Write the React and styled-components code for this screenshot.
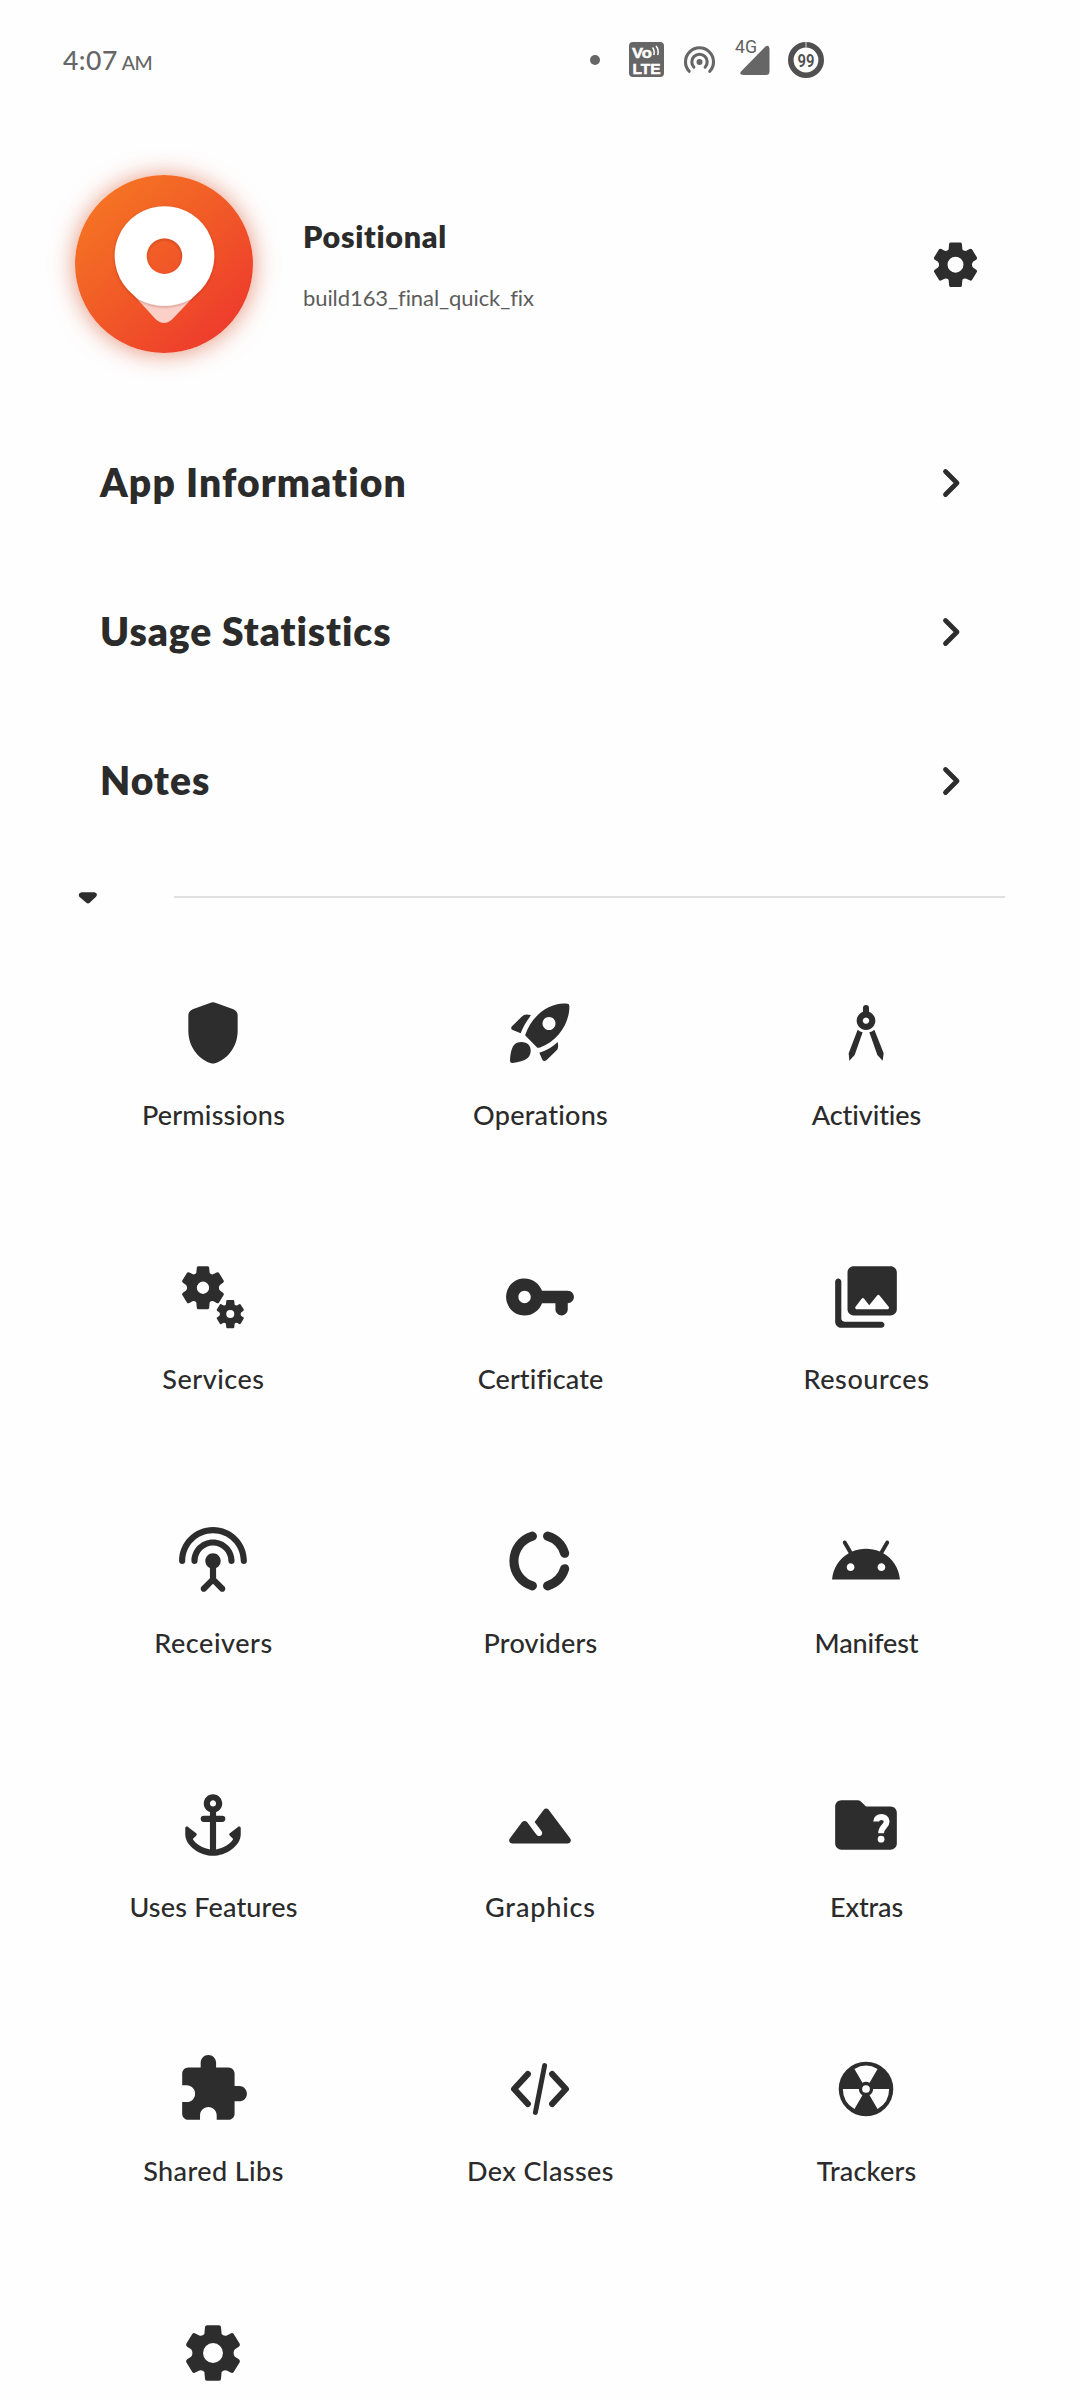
import React from 'react';
import styled, { createGlobalStyle } from 'styled-components';

const INK = '#2d2d2d';

const GlobalStyle = createGlobalStyle`
  html, body { margin: 0; background: #fefefe; }
  * { box-sizing: border-box; }
`;

const Screen = styled.main`
  width: 1080px;
  height: 2400px;
  overflow: hidden;
  display: flex;
  flex-direction: column;
  background: #fefefe;
  color: #2b2b2b;
  font-family: Lato, 'Open Sans', sans-serif;
  font-variant-ligatures: none;
`;

const StatusBar = styled.header`
  flex: none;
  display: flex;
  justify-content: space-between;
  align-items: center;
  height: 120px;
  padding: 0 256px 0 63px;
  color: #666;
`;

const Clock = styled.div`
  display: flex;
  align-items: baseline;
  gap: 4px;
`;

const Time = styled.span`
  font-size: 26.5px;
  font-weight: 500;
  letter-spacing: 0.5px;
`;

const Meridiem = styled.span`
  font-size: 19.5px;
  font-weight: 500;
  letter-spacing: -0.6px;
`;

const StatusIcons = styled.div`
  display: flex;
  align-items: center;
`;

const StatusGlyph = styled.svg`
  display: block;
  width: ${(p) => p.$w}px;
  height: 44px;
  margin-left: ${(p) => p.$gap || 0}px;
  overflow: visible;
`;

const AppHeader = styled.section`
  flex: none;
  display: flex;
  align-items: center;
  height: 288px;
  padding: 0 102px 0 75px;
`;

const AppLogo = styled.div`
  flex: none;
  width: 178px;
  height: 178px;
  border-radius: 50%;
  background: linear-gradient(138deg, #f57523 10%, #f15a27 48%, #ed382d 92%);
  box-shadow: 0 1px 24px 0 rgba(215, 75, 34, 0.6);

  svg { display: block; }
`;

const AppTitles = styled.div`
  flex: 1;
  display: flex;
  flex-direction: column;
  gap: 31px;
  margin-left: 50px;
`;

const AppName = styled.h1`
  margin: 0;
  font-size: 30.5px;
  line-height: 36px;
  font-weight: 800;
  letter-spacing: 0.7px;
`;

const AppBuild = styled.div`
  font-size: 22px;
  line-height: 26px;
  letter-spacing: -0.08px;
  color: #5c5c5c;
`;

const Menu = styled.nav`
  flex: none;
  display: flex;
  flex-direction: column;
`;

const MenuRow = styled.div`
  display: flex;
  align-items: center;
  justify-content: space-between;
  height: 149px;
  padding: 0 118px 0 100px;
`;

const MenuLabel = styled.span`
  padding-bottom: 2px;
  font-size: 39px;
  line-height: 48px;
  font-weight: 800;
  letter-spacing: ${(p) => p.$track}px;
`;

const SectionBreak = styled.div`
  flex: none;
  display: flex;
  align-items: center;
  gap: 76px;
  height: 84px;
  padding: 0 75px 0 78px;
`;

const Rule = styled.hr`
  flex: 1;
  height: 2px;
  margin: 0;
  border: 0;
  background: #e0e0e0;
`;

const Grid = styled.section`
  flex: none;
  display: grid;
  grid-template-columns: 326px 328px 324px;
  grid-auto-rows: 264px;
  margin: 0 50px;
`;

const Tile = styled.div`
  display: flex;
  flex-direction: column;
  align-items: center;
  padding-top: 57px;
`;

const TileIcon = styled.svg`
  display: block;
  width: 74px;
  height: 74px;
  fill: ${INK};
`;

const TileLabel = styled.span`
  margin-top: 28px;
  padding-left: 1px;
  font-size: 27px;
  line-height: 34px;
  font-weight: 500;
  letter-spacing: ${(p) => p.$track}px;
  white-space: nowrap;
`;

const GEAR =
  'M231 135H267Q272 135 273 140L275 162Q279 167 286 167Q290 167 302 160Q308 157 311 161L330 192Q331 197 327 200L315 208Q311 213 311 219Q311 225 315 230L327 238Q331 241 330 246L311 277Q308 281 302 278Q290 271 286 271Q279 271 275 276L273 298Q272 303 267 303H231Q226 303 225 298L223 276Q219 271 212 271Q208 271 196 278Q190 281 187 277L168 246Q167 241 171 238L183 230Q187 225 187 219Q187 213 183 208L171 200Q167 197 168 192L187 161Q190 157 196 160Q208 167 212 167Q219 167 223 162L225 140Q226 135 231 135Z';

const gearHole = (r) => `M${249 - r} 219a${r} ${r} 0 1 0 ${2 * r} 0a${r} ${r} 0 1 0 ${-2 * r} 0Z`;

function GearShape({ cx, cy, height, hole = 30 }) {
  const s = height / 168;
  return (
    <path
      fill={INK}
      fillRule="evenodd"
      transform={`translate(${cx - 249 * s} ${cy - 219 * s}) scale(${s})`}
      d={GEAR + gearHole(hole)}
    />
  );
}

const icons = {
  shield: {
    box: '348 408 222 222',
    art: <path d="M450 429Q459 425 468 429L520 448Q533 454 533 466V512C533 558 505 596 467 609Q459 612 451 609C413 596 385 558 385 512V466Q385 454 398 448Z" />,
  },
  rocket: {
    box: '189 48 222 222',
    art: (
      <>
        <path fillRule="evenodd" d="M382 71Q388 71 388 78C390 118 361 183 298 203Q293 205 289 200L258 169Q254 166 257 161C279 100 336 65 382 71ZM327 111a19.500 19.500 0 1 0 .01 0Z" />
        <path d="M273 106C258 125 249 142 242 160L218 150Q210 146 216 139L245 110Q255 99 273 106Z" />
        <path d="M353 186C340 200 320 211 298 218L307 239Q312 247 320 240L350 211Q357 204 353 186Z" />
        <path d="M210 242C211 222 214 205 222 195C230 184 255 182 266 194C275 204 274 224 263 234C252 243 236 246 218 249Q210 250 210 242Z" />
      </>
    ),
  },
  compass: {
    box: '1167 48 222 222',
    art: (
      <>
        <path fillRule="evenodd" d="M1269 84a9 9 0 0 1 18 0V95.500A28 28 0 1 1 1269 95.500ZM1278 112.500a9.500 9.500 0 1 0 .01 0Z" />
        <path d="M1253 149Q1260 155 1268 157L1244 225L1228 242L1226 220Z" />
        <path d="M1303 149Q1296 155 1288 157L1312 225L1328 242L1331 220Z" />
      </>
    ),
  },
  gears: {
    art: (
      <>
        <GearShape cx={8.75} cy={9} height={14} hole={24} />
        <GearShape cx={17.6} cy={17.55} height={9.1} hole={24} />
      </>
    ),
  },
  key: {
    art: <path d="M12.650 10C11.700 7.310 8.900 5.500 5.770 6.120c-2.290.46-4.150 2.290-4.630 4.580C.32 14.570 3.260 18 7 18c2.610 0 4.830-1.670 5.650-4H17v2c0 1.100.9 2 2 2s2-.9 2-2v-2c1.100 0 2-.9 2-2s-.9-2-2-2h-8.350zM7 14c-1.100 0-2-.9-2-2s.9-2 2-2 2 .9 2 2-.9 2-2 2z" />,
  },
  images: {
    art: <path d="M22 16V4c0-1.100-.9-2-2-2H8c-1.100 0-2 .9-2 2v12c0 1.100.9 2 2 2h12c1.100 0 2-.9 2-2zm-10.600-3.470l1.630 2.180 2.580-3.220c.2-.25.58-.25.78 0l2.960 3.700c.26.33.03.81-.39.81H9c-.41 0-.65-.47-.4-.8l2-2.670c.2-.26.6-.26.8 0zM2 7v13c0 1.100.9 2 2 2h13c.55 0 1-.45 1-1s-.45-1-1-1H5c-.55 0-1-.45-1-1V7c0-.55-.45-1-1-1s-1 .45-1 1z" />,
  },
  antenna: {
    art: <path d="M12 5c-3.870 0-7 3.130-7 7 0 .55.45 1 1 1s1-.45 1-1c0-2.760 2.240-5 5-5s5 2.240 5 5c0 .55.45 1 1 1s1-.45 1-1c0-3.870-3.130-7-7-7zm1 9.290c.88-.39 1.500-1.260 1.500-2.290 0-1.380-1.120-2.500-2.500-2.500S9.500 10.620 9.500 12c0 1.020.62 1.900 1.500 2.290v3.300l-2.710 2.700c-.39.39-.39 1.020 0 1.410.39.39 1.020.39 1.410 0L12 19.410l2.300 2.300c.39.39 1.020.39 1.410 0 .39-.39.39-1.020 0-1.410l-2.700-2.700-.01-3.310zM12 1C5.930 1 1 5.930 1 12c0 .55.45 1 1 1s1-.45 1-1c0-4.970 4.030-9 9-9s9 4.030 9 9c0 .55.45 1 1 1s1-.45 1-1c0-6.070-4.930-11-11-11z" />,
  },
  ring: {
    art: (
      <g fill="none" stroke={INK} strokeWidth="2.950" strokeLinecap="round">
        <path d="M9.550 3.950A8.400 8.400 0 0 0 9.550 20.050" />
        <path d="M14.450 3.950A8.400 8.400 0 0 1 20 9.500" />
        <path d="M20 14.500A8.400 8.400 0 0 1 14.450 20.050" />
      </g>
    ),
  },
  android: {
    art: <path d="M17.600 9.480l1.840-3.180c.16-.31.04-.69-.26-.85-.29-.15-.65-.06-.83.22l-1.880 3.240c-2.860-1.210-6.080-1.210-8.940 0L5.650 5.670c-.19-.29-.58-.38-.87-.2-.28.18-.37.54-.22.83L6.400 9.480C3.300 11.250 1.280 14.440 1 18h22c-.28-3.560-2.300-6.750-5.400-8.520zM7 15.250c-.69 0-1.250-.56-1.250-1.250s.56-1.250 1.250-1.250 1.250.56 1.250 1.250-.56 1.250-1.250 1.250zm10 0c-.69 0-1.250-.56-1.250-1.250s.56-1.250 1.250-1.250 1.250.56 1.250 1.250-.56 1.250-1.250 1.250z" />,
  },
  anchor: {
    art: <path d="M13 9V7.820C14.160 7.400 15 6.300 15 5c0-1.650-1.350-3-3-3S9 3.350 9 5c0 1.300.84 2.400 2 2.820V9H9a1 1 0 0 0 0 2h2v8.920c-2.220-.33-4.590-1.680-5.550-3.370l1.140-1.140c.22-.22.19-.57-.05-.75L3.800 12.600c-.33-.25-.8-.01-.8.4V15c0 3.880 4.920 7 9 7s9-3.120 9-7v-2c0-.41-.47-.65-.8-.4l-2.740 2.060c-.24.18-.27.54-.05.75l1.140 1.140c-.96 1.690-3.330 3.040-5.550 3.370V11h2a1 1 0 0 0 0-2zM12 4c.55 0 1 .45 1 1s-.45 1-1 1-1-.45-1-1 .45-1 1-1z" />,
  },
  peaks: {
    art: <path d="M13.200 7.070L10.250 11l2.250 3c.33.44.24 1.070-.2 1.400-.44.33-1.070.25-1.400-.2-1.050-1.400-2.310-3.070-3.100-4.140-.4-.53-1.200-.53-1.600 0l-4 5.330c-.49.67-.02 1.610.8 1.610h18c.82 0 1.290-.94.8-1.600l-7-9.330c-.4-.54-1.200-.54-1.600 0z" />,
  },
  folder: {
    art: (
      <>
        <path d="M20 6h-8l-1.410-1.410C10.210 4.210 9.700 4 9.170 4H4C2.900 4 2 4.900 2 6v12c0 1.100.9 2 2 2h16c1.100 0 2-.9 2-2V8c0-1.100-.9-2-2-2z" />
        <path fill="none" stroke="#fefefe" strokeWidth="1.900" d="M15.300 10.900C15.300 8.900 18.700 8.900 18.700 10.900C18.700 12.600 16.900 12.300 16.900 14.700" />
        <circle cx="16.900" cy="16.600" r="1.100" fill="#fefefe" />
      </>
    ),
  },
  puzzle: {
    art: <path d="M20.500 11H19V7c0-1.100-.9-2-2-2h-4V3.500C13 2.120 11.880 1 10.500 1S8 2.120 8 3.500V5H4c-1.100 0-1.990.9-1.990 2v3.800H3.500c1.490 0 2.700 1.210 2.700 2.700s-1.210 2.700-2.700 2.700H2V20c0 1.100.9 2 2 2h3.800v-1.500c0-1.490 1.210-2.700 2.700-2.700 1.490 0 2.700 1.210 2.700 2.700V22H17c1.100 0 2-.9 2-2v-4h1.500c1.380 0 2.500-1.120 2.500-2.500S21.880 11 20.500 11z" />,
  },
  code: {
    art: (
      <g fill="none" stroke={INK} strokeLinecap="round" strokeLinejoin="round">
        <path strokeWidth="2" d="M8.050 7.150L3.600 12L8.050 16.850M15.950 7.150L20.400 12L15.950 16.850" />
        <path strokeWidth="1.600" d="M13.500 4.400L10.500 19.600" />
      </g>
    ),
  },
  radiation: {
    art: (
      <>
        <circle cx="12" cy="12" r="8.850" />
        <g fill="#fefefe">
          <path d="M14.300 12H19.500A7.500 7.500 0 0 1 15.750 18.500L13.150 14A2.300 2.300 0 0 0 14.300 12Z" />
          <path d="M9.700 12H4.500A7.500 7.500 0 0 0 8.250 18.500L10.850 14A2.300 2.300 0 0 1 9.700 12Z" />
          <path d="M10.850 10L8.250 5.500A7.500 7.500 0 0 1 15.750 5.500L13.150 10A2.300 2.300 0 0 0 10.850 10Z" />
          <circle cx="12" cy="12" r="1.250" />
        </g>
      </>
    ),
  },
  gear: { art: <GearShape cx={12} cy={12} height={18.07} /> },
};

const menu = [
  { label: 'App Information', track: 1.12 },
  { label: 'Usage Statistics', track: 0.93 },
  { label: 'Notes', track: 1.06 },
];

const tiles = [
  { label: 'Permissions', icon: 'shield', track: 0.2 },
  { label: 'Operations', icon: 'rocket', track: 0.25 },
  { label: 'Activities', icon: 'compass', track: -0.1 },
  { label: 'Services', icon: 'gears', track: 0.52 },
  { label: 'Certificate', icon: 'key', track: 0.1 },
  { label: 'Resources', icon: 'images', track: 0.6 },
  { label: 'Receivers', icon: 'antenna', track: 0.55 },
  { label: 'Providers', icon: 'ring', track: 0.21 },
  { label: 'Manifest', icon: 'android', track: -0.1 },
  { label: 'Uses Features', icon: 'anchor', track: 0.18 },
  { label: 'Graphics', icon: 'peaks', track: 0.84 },
  { label: 'Extras', icon: 'folder', track: -0.15 },
  { label: 'Shared Libs', icon: 'puzzle', track: 0.42 },
  { label: 'Dex Classes', icon: 'code', track: 0.42 },
  { label: 'Trackers', icon: 'radiation', track: 0.19 },
  { icon: 'gear' },
];

function StatusTray() {
  return (
    <StatusIcons>
      <StatusGlyph $w={10} viewBox="0 0 10 44">
        <circle cx="5" cy="22" r="5" fill="#666" />
      </StatusGlyph>
      <StatusGlyph $w={35} $gap={29} viewBox="0 0 35 44">
        <rect y="4" width="35" height="35" rx="4" fill="#666" />
        <g fill="#fefefe" stroke="#fefefe" strokeWidth="0.500" fontFamily="Liberation Sans, sans-serif" fontWeight="700" fontSize="15.500">
          <text x="3" y="19.500" textLength="20" lengthAdjust="spacingAndGlyphs">Vo</text>
          <text x="3.500" y="35.500" textLength="28" lengthAdjust="spacingAndGlyphs">LTE</text>
        </g>
        <path d="M23.500 9.500Q26 12.500 24.800 17M27 8Q30.300 12 28.600 17" fill="none" stroke="#fefefe" strokeWidth="1.500" />
      </StatusGlyph>
      <StatusGlyph $w={31} $gap={20} viewBox="0 0 31 44">
        <g fill="none" stroke="#666" strokeWidth="3.100" strokeLinecap="round">
          <path d="M5.200 33.300A14 14 0 1 1 25.800 33.300" />
          <path d="M9.900 29.200A7.700 7.700 0 1 1 21.100 29.200" />
        </g>
        <circle cx="15.500" cy="24" r="3" fill="#666" />
      </StatusGlyph>
      <StatusGlyph $w={35} $gap={20} viewBox="0 0 35 44">
        <path d="M30.500 8.500Q34 6 34.500 11V33.500Q34.500 37 31 37H9Q3.500 37 6 33.500Z" fill="#666" />
        <rect x="0" y="0" width="22.500" height="16" fill="#fefefe" />
        <text x="0" y="15.300" fontFamily="Roboto, sans-serif" fontSize="17.500" fontWeight="400" fill="#606060" textLength="22" lengthAdjust="spacingAndGlyphs">4G</text>
      </StatusGlyph>
      <StatusGlyph $w={36} $gap={18} viewBox="0 0 36 44">
        <circle cx="18" cy="22" r="15.200" fill="none" stroke="#505050" strokeWidth="5.600" />
        <path d="M18 3.500V9.500" stroke="#fefefe" strokeWidth="0.800" />
        <text x="9.500" y="28.500" fontFamily="Roboto, sans-serif" fontSize="18" fontWeight="600" fill="#505050" textLength="17" lengthAdjust="spacingAndGlyphs">99</text>
      </StatusGlyph>
    </StatusIcons>
  );
}

function PinLogo() {
  return (
    <AppLogo>
      <svg width="178" height="178" viewBox="0 0 178 178">
        <defs>
          <filter id="pinShade" x="-20%" y="-20%" width="140%" height="140%">
            <feDropShadow dx="0" dy="1" stdDeviation="1.800" floodColor="#7a2408" floodOpacity="0.350" />
          </filter>
        </defs>
        <path d="M53 114L80.500 144Q89 152 97.500 144L126 114Z" fill="#fbd0c8" />
        <path
          filter="url(#pinShade)"
          fill="#fff"
          fillRule="evenodd"
          d="M89.500 31.200A49.700 49.700 0 0 1 126 114.700L116 124Q103 131 89.500 131Q76 131 63 124L53 114.700A49.700 49.700 0 0 1 89.500 31.200ZM89.500 63.300A17.800 17.800 0 1 0 89.510 63.300Z"
        />
      </svg>
    </AppLogo>
  );
}

export default function App() {
  return (
    <Screen>
      <GlobalStyle />
      <StatusBar>
        <Clock>
          <Time>4:07</Time>
          <Meridiem>AM</Meridiem>
        </Clock>
        <StatusTray />
      </StatusBar>

      <AppHeader>
        <PinLogo />
        <AppTitles>
          <AppName>Positional</AppName>
          <AppBuild>build163_final_quick_fix</AppBuild>
        </AppTitles>
        <svg width="45" height="45" viewBox="0 0 45 45">
          <GearShape cx={22.5} cy={22.7} height={44.6} />
        </svg>
      </AppHeader>

      <Menu>
        {menu.map((item) => (
          <MenuRow key={item.label}>
            <MenuLabel $track={item.track}>{item.label}</MenuLabel>
            <svg width="20" height="30" viewBox="0 0 20 30">
              <path d="M3.500 3.500L15 15L3.500 26.500" fill="none" stroke={INK} strokeWidth="4.800" strokeLinecap="round" strokeLinejoin="round" />
            </svg>
          </MenuRow>
        ))}
      </Menu>

      <SectionBreak>
        <svg width="20" height="14" viewBox="0 0 20 14">
          <path d="M3.500 2.200H16.500Q20.500 3.400 18 6.700L11.700 12.800Q10 14.200 8.300 12.800L1.300 6.700Q-0.500 3.400 3.500 2.200Z" fill={INK} />
        </svg>
        <Rule />
      </SectionBreak>

      <Grid>
        {tiles.map((tile) => (
          <Tile key={tile.icon}>
            <TileIcon viewBox={icons[tile.icon].box || '0 0 24 24'}>{icons[tile.icon].art}</TileIcon>
            {tile.label && <TileLabel $track={tile.track}>{tile.label}</TileLabel>}
          </Tile>
        ))}
      </Grid>
    </Screen>
  );
}
